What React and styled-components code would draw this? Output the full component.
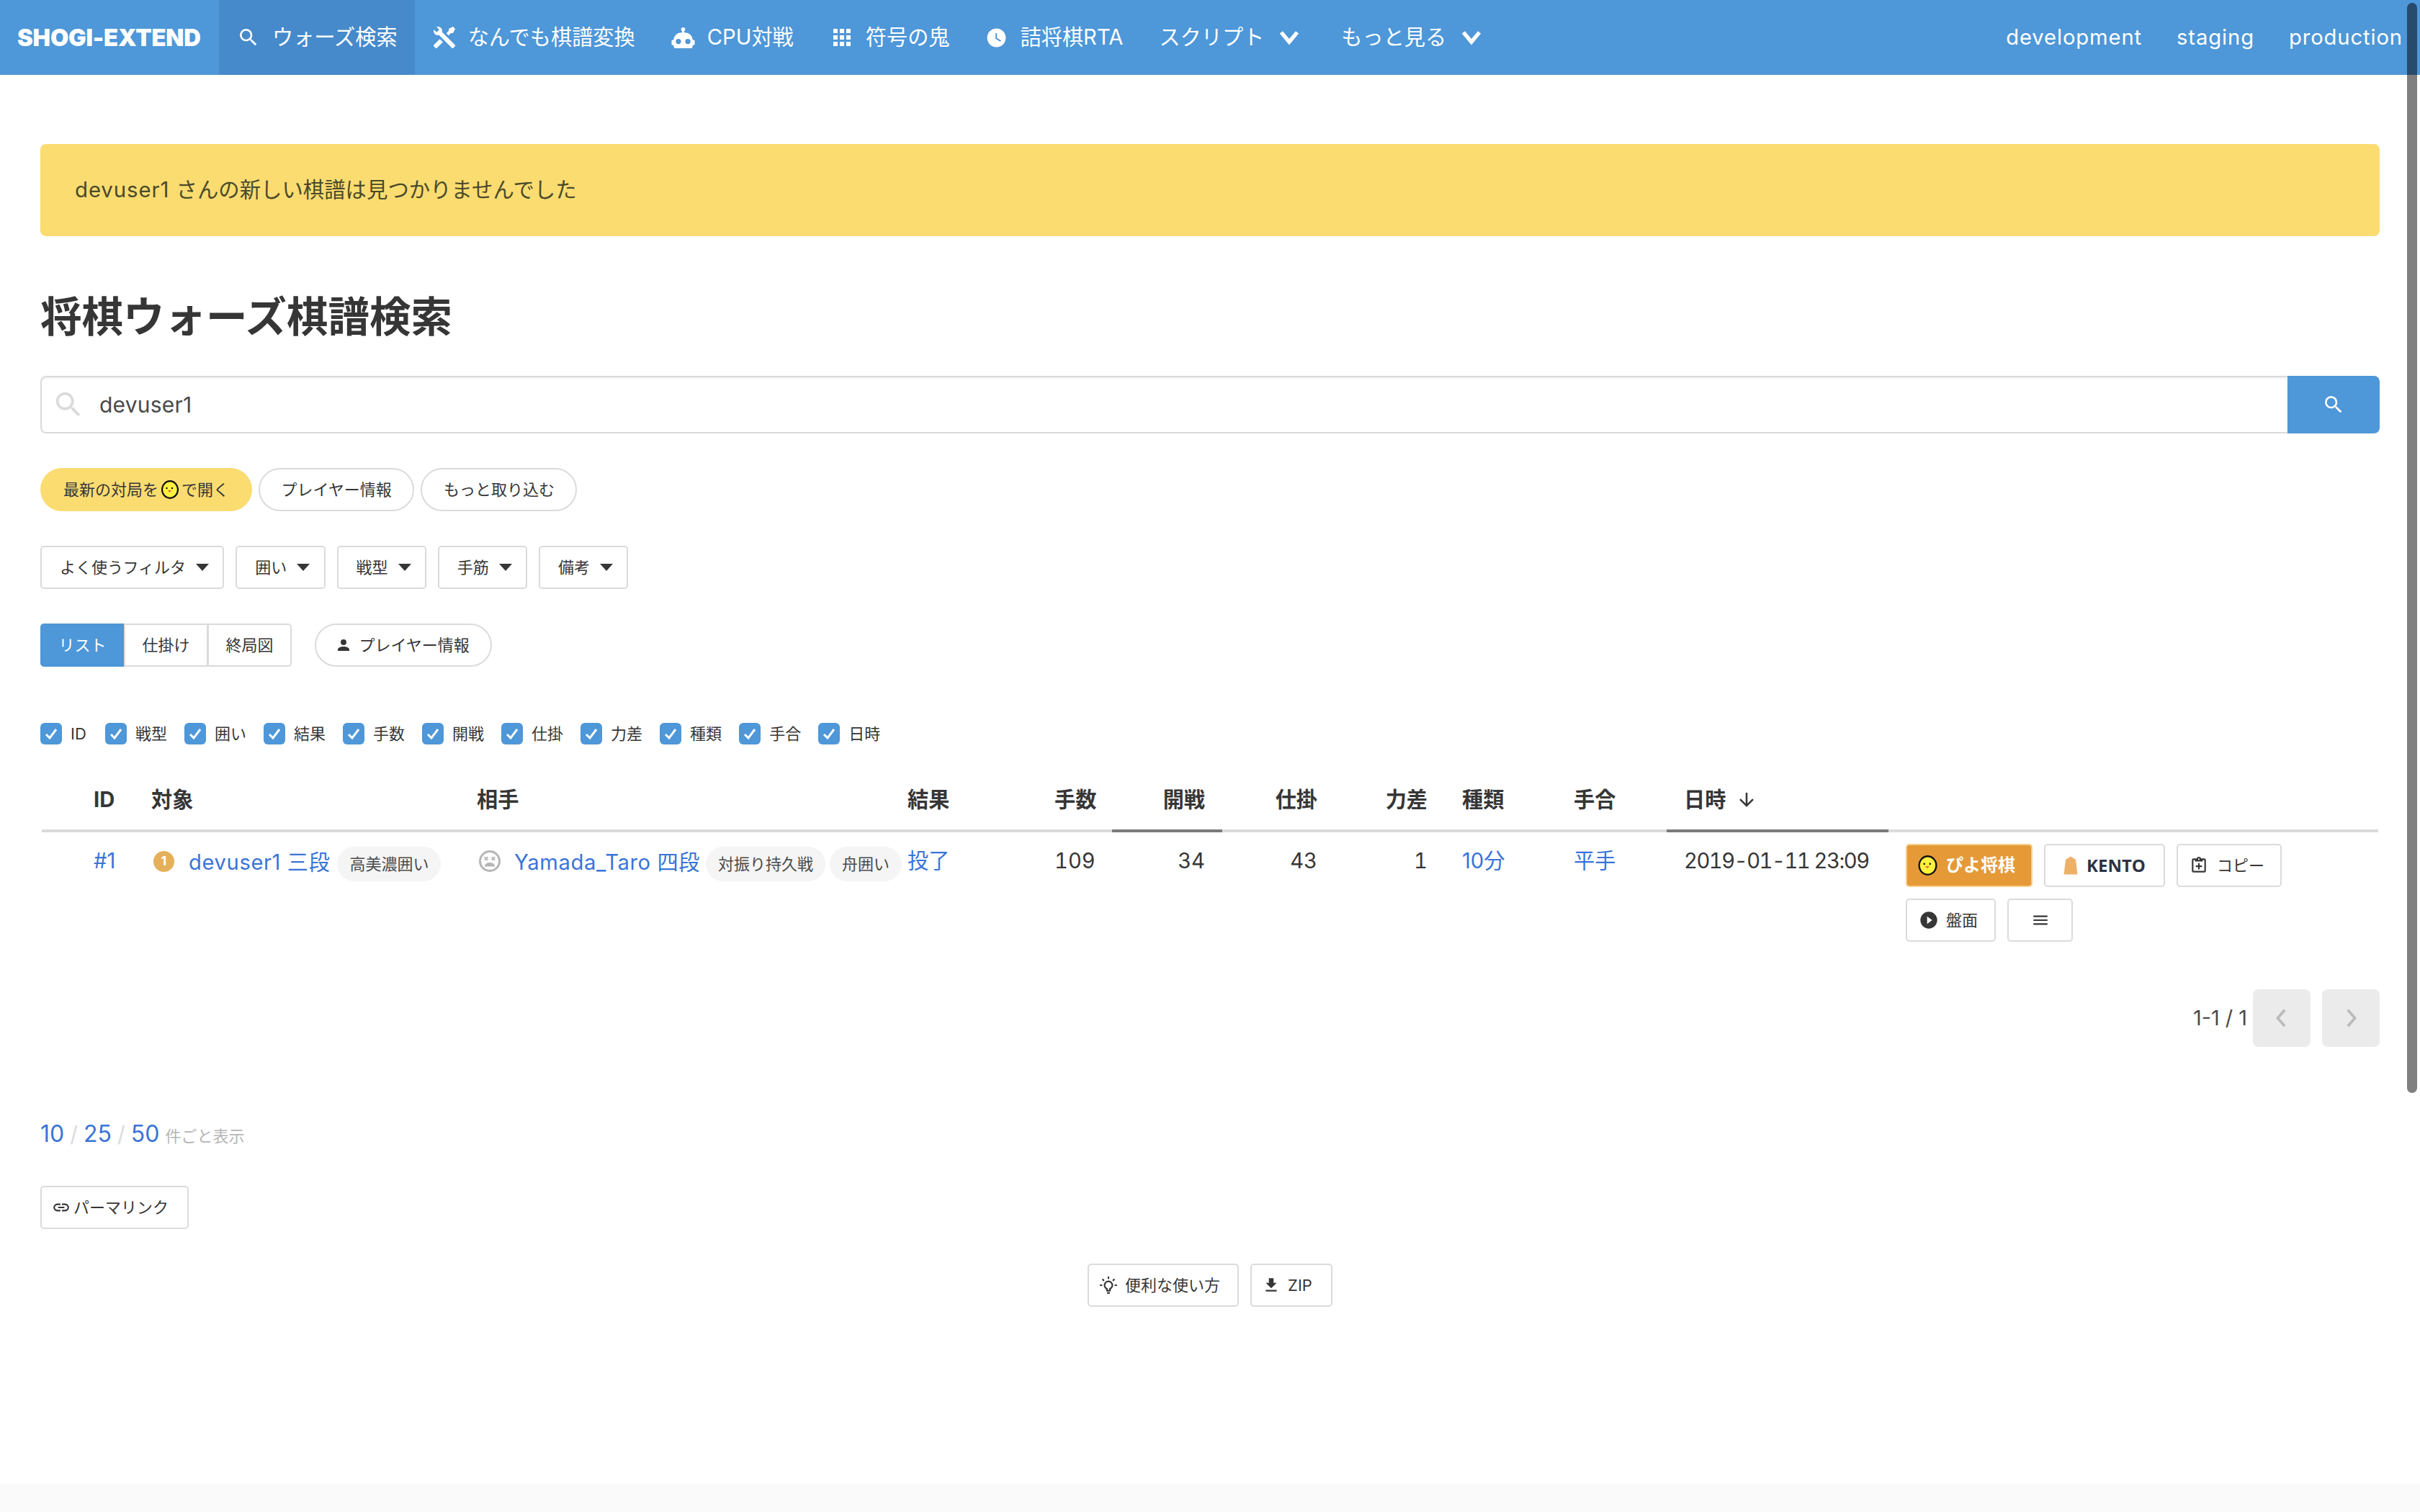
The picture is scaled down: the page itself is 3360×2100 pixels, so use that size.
import React from 'react';
import styled, { createGlobalStyle } from 'styled-components';

const GlobalStyle = createGlobalStyle`
  html, body {
    margin: 0;
    padding: 0;
    height: 2100px;
    overflow: hidden;
    background: #fff;
    color: #363636;
    font-family: Inter, "Noto Sans CJK JP", sans-serif;
    font-size: 29.2px;
    line-height: 1.5;
  }
  * {
    box-sizing: border-box;
  }
`;

const PATHS = {
  magnify: 'M9.5,3A6.5,6.5 0 0,1 16,9.5C16,11.11 15.41,12.59 14.44,13.73L14.71,14H15.5L20.5,19L19,20.5L14,15.5V14.71L13.73,14.44C12.59,15.41 11.11,16 9.5,16A6.5,6.5 0 0,1 3,9.5A6.5,6.5 0 0,1 9.5,3M9.5,5C7,5 5,7 5,9.5C5,12 7,14 9.5,14C12,14 14,12 14,9.5C14,7 12,5 9.5,5Z',
  tools: 'M21.71 20.29L20.29 21.71A1 1 0 0 1 18.88 21.71L7 9.85A3.81 3.81 0 0 1 6 10A4 4 0 0 1 2.22 4.7L4.76 7.24L5.29 6.71L6.71 5.29L7.24 4.76L4.7 2.22A4 4 0 0 1 10 6A3.81 3.81 0 0 1 9.85 7L21.71 18.88A1 1 0 0 1 21.71 20.29M2.29 18.88A1 1 0 0 0 2.29 20.29L3.71 21.71A1 1 0 0 0 5.12 21.71L10.59 16.25L7.76 13.42M20 2L16 4V6L13.83 8.17L15.83 10.17L18 8H20L22 4Z',
  robot: 'M12,2A2,2 0 0,1 14,4C14,4.74 13.6,5.39 13,5.73V7H14A7,7 0 0,1 21,14H22A1,1 0 0,1 23,15V18A1,1 0 0,1 22,19H21V20A2,2 0 0,1 19,22H5A2,2 0 0,1 3,20V19H2A1,1 0 0,1 1,18V15A1,1 0 0,1 2,14H3A7,7 0 0,1 10,7H11V5.73C10.4,5.39 10,4.74 10,4A2,2 0 0,1 12,2M7.5,13A2.5,2.5 0 0,0 5,15.5A2.5,2.5 0 0,0 7.5,18A2.5,2.5 0 0,0 10,15.5A2.5,2.5 0 0,0 7.5,13M16.5,13A2.5,2.5 0 0,0 14,15.5A2.5,2.5 0 0,0 16.5,18A2.5,2.5 0 0,0 19,15.5A2.5,2.5 0 0,0 16.5,13Z',
  apps: 'M16,20H20V16H16M16,14H20V10H16M10,8H14V4H10M16,8H20V4H16M10,14H14V10H10M4,14H8V10H4M4,20H8V16H4M10,20H14V16H10M4,8H8V4H4V8Z',
  clock: 'M12,2A10,10 0 0,0 2,12A10,10 0 0,0 12,22A10,10 0 0,0 22,12A10,10 0 0,0 12,2M16.2,16.2L11,13V7H12.5V12.2L17,14.9L16.2,16.2Z',
  account: 'M12,4A4,4 0 0,1 16,8A4,4 0 0,1 12,12A4,4 0 0,1 8,8A4,4 0 0,1 12,4M12,14C16.42,14 20,15.79 20,18V20H4V18C4,15.79 7.58,14 12,14Z',
  arrowDown: 'M11,4H13V16L18.5,10.5L19.92,11.92L12,19.84L4.08,11.92L5.5,10.5L11,16V4Z',
  clipboardPlus: 'M19,3H14.82C14.4,1.84 13.3,1 12,1C10.7,1 9.6,1.84 9.18,3H5A2,2 0 0,0 3,5V19A2,2 0 0,0 5,21H19A2,2 0 0,0 21,19V5A2,2 0 0,0 19,3M12,3A1,1 0 0,1 13,4A1,1 0 0,1 12,5A1,1 0 0,1 11,4A1,1 0 0,1 12,3M7,7H17V5H19V19H5V5H7V7M11,9H13V12H16V14H13V17H11V14H8V12H11V9Z',
  playCircle: 'M10,16.5V7.5L16,12M12,2A10,10 0 0,0 2,12A10,10 0 0,0 12,22A10,10 0 0,0 22,12A10,10 0 0,0 12,2Z',
  menu: 'M3,6H21V8H3V6M3,11H21V13H3V11M3,16H21V18H3V16Z',
  link: 'M3.9,12C3.9,10.29 5.29,8.9 7,8.9H11V7H7A5,5 0 0,0 2,12A5,5 0 0,0 7,17H11V15.1H7C5.29,15.1 3.9,13.71 3.9,12M8,13H16V11H8V13M17,7H13V8.9H17C18.71,8.9 20.1,10.29 20.1,12C20.1,13.71 18.71,15.1 17,15.1H13V17H17A5,5 0 0,0 22,12A5,5 0 0,0 17,7Z',
  bulb: 'M20,11H23V13H20V11M1,11H4V13H1V11M13,1V4H11V1H13M4.92,3.5L7.05,5.64L5.63,7.05L3.5,4.93L4.92,3.5M16.95,5.63L19.07,3.5L20.5,4.93L18.36,7.05L16.95,5.63M12,6A6,6 0 0,1 18,12C18,14.22 16.79,16.16 15,17.2V19A1,1 0 0,1 14,20H10A1,1 0 0,1 9,19V17.2C7.21,16.16 6,14.22 6,12A6,6 0 0,1 12,6M14,21V22A1,1 0 0,1 13,23H11A1,1 0 0,1 10,22V21H14M11,18H13V15.87C14.73,15.43 16,13.86 16,12A4,4 0 0,0 12,8A4,4 0 0,0 8,12C8,13.86 9.27,15.43 11,15.87V18Z',
  download: 'M5,20H19V18H5M19,9H15V3H9V9H5L12,16L19,9Z',
};

const Mdi = ({ name, size = 28, color = 'currentColor' }) => (
  <svg width={size} height={size} viewBox="0 0 24 24" fill={color} style={{ flexShrink: 0 }}>
    <path d={PATHS[name]} />
  </svg>
);

const Chevron = ({ dir, size, color = '#fff', weight = 3.4 }) => {
  const points = {
    down: '5,7.5 12,16 19,7.5',
    left: '15,4 8,12 15,20',
    right: '9,4 16,12 9,20',
  }[dir];
  return (
    <svg width={size} height={size} viewBox="0 0 24 24" fill="none" stroke={color} strokeWidth={weight}>
      <polyline points={points} />
    </svg>
  );
};

const Chick = ({ width = 24, height = 26 }) => (
  <svg width={width} height={height} viewBox="0 0 24 26" style={{ flexShrink: 0 }}>
    <ellipse cx="12" cy="13" rx="11" ry="11.8" fill="#fff23f" stroke="#111" strokeWidth="2.2" />
    <circle cx="7.5" cy="11" r="1.2" fill="#111" />
    <circle cx="15" cy="11" r="1.2" fill="#111" />
    <path d="M8.5 14h6l-3 3z" fill="#f0703a" />
  </svg>
);

const Koma = () => (
  <svg width="20" height="26" viewBox="0 0 20 26" style={{ flexShrink: 0 }}>
    <path d="M10 0.5L17 5L19.5 25.5H0.5L3 5Z" fill="#eeb069" />
  </svg>
);

const DeadFace = () => (
  <svg width="36" height="36" viewBox="0 0 24 24" fill="none" stroke="#b5b5b5" style={{ flexShrink: 0 }}>
    <circle cx="12" cy="12" r="9" strokeWidth="2" />
    <path d="M7.2 8.2l3 3m0-3l-3 3M13.8 8.2l3 3m0-3l-3 3" strokeWidth="1.3" />
    <path d="M7 17c1-3 3-3.6 5-3.6s4 .6 5 3.6z" fill="#b5b5b5" strokeWidth="0" />
  </svg>
);

const Navbar = styled.nav`
  display: flex;
  align-items: stretch;
  height: 104px;
  background: #4e97d8;
  color: #fff;
`;

const Logo = styled.div`
  display: flex;
  align-items: center;
  width: 304px;
  padding: 2px 0 0 24px;
  font-size: 32.7px;
  font-weight: 900;
  letter-spacing: -0.2px;
  white-space: nowrap;
`;

const NavItem = styled.div`
  display: flex;
  align-items: center;
  padding: 0 ${p => p.$right || 24}px 0 24px;
  white-space: nowrap;
  letter-spacing: ${p => (p.$spaced ? '0.9px' : 'normal')};
  background: ${p => (p.$active ? '#468acb' : 'transparent')};
`;

const NavIcon = styled.span`
  display: flex;
  align-items: center;
  justify-content: center;
  width: 42px;
  height: 42px;
  padding-right: 8px;
  margin-right: 8px;
`;

const NavCaret = styled.span`
  display: flex;
  margin-left: 16px;
`;

const NavEnd = styled.div`
  display: flex;
  margin-left: auto;
`;

const Page = styled.main`
  padding: 96px 56px 0;
`;

const Alert = styled.div`
  height: 128px;
  padding: 0 48px;
  display: flex;
  align-items: center;
  background: #fbdc71;
  border-radius: 8px;
  color: #4a4a2a;
  font-size: 29.4px;
  white-space: pre;
`;

const Latin = styled.span`
  letter-spacing: 0.9px;
`;

const Title = styled.h1`
  margin: 72px 0 42px;
  font-size: 57.5px;
  line-height: 80px;
  font-weight: 700;
`;

const SearchRow = styled.div`
  display: flex;
  height: 80px;
  margin-bottom: 48px;
`;

const SearchBox = styled.div`
  flex: 1;
  display: flex;
  align-items: center;
  padding-left: 14px;
  gap: 20px;
  border: 2px solid #dbdbdb;
  border-right: none;
  border-radius: 8px 0 0 8px;
  box-shadow: inset 0 2px 3px rgba(10, 10, 10, 0.06);
  color: #4a4a4a;
  font-size: 30px;
  letter-spacing: 0.2px;
`;

const SearchButton = styled.div`
  width: 128px;
  display: flex;
  align-items: center;
  justify-content: center;
  background: #4e97d8;
  border-radius: 0 8px 8px 0;
  color: #fff;
`;

const ButtonRow = styled.div`
  display: flex;
  gap: ${p => p.$gap || 16}px;
  margin-bottom: ${p => p.$bottom || 0}px;
  justify-content: ${p => (p.$center ? 'center' : 'flex-start')};
  flex-wrap: wrap;
`;

const Pill = styled.div`
  display: flex;
  align-items: center;
  height: 60px;
  padding: 0 ${p => (p.$yellow ? 32 : 29.5)}px;
  border: ${p => (p.$yellow ? 'none' : '2px solid #dbdbdb')};
  border-radius: 30px;
  background: ${p => (p.$yellow ? '#fbdc71' : '#fff')};
  font-size: 22px;
  white-space: nowrap;
`;

const PillChick = styled.span`
  display: flex;
  margin: 0 4px;
`;

const PillIcon = styled.span`
  display: flex;
  margin: 0 10px 0 -4px;
`;

const DropButton = styled.div`
  display: flex;
  align-items: center;
  height: 60px;
  padding: 0 19.2px 0 25px;
  border: 2px solid #dbdbdb;
  border-radius: 5px;
  font-size: 22px;
  white-space: nowrap;

  &::after {
    content: '';
    margin-left: 14px;
    border-style: solid;
    border-width: 10px 9.5px 0;
    border-color: #363636 transparent transparent;
  }
`;

const TabGroup = styled.div`
  display: flex;
`;

const Tab = styled.div`
  display: flex;
  align-items: center;
  justify-content: center;
  width: 117px;
  height: 60px;
  margin-left: ${p => (p.$first ? 0 : -1)}px;
  border: 2px solid ${p => (p.$active ? '#4e97d8' : '#dbdbdb')};
  border-radius: ${p => (p.$first ? '5px 0 0 5px' : p.$last ? '0 5px 5px 0' : '0')};
  background: ${p => (p.$active ? '#4e97d8' : '#fff')};
  color: ${p => (p.$active ? '#fff' : '#363636')};
  font-size: 22px;
`;

const ColumnChecks = styled.div`
  display: flex;
  gap: 24px;
  margin: 78px 0 42px;
`;

const Check = styled.label`
  display: flex;
  align-items: center;
  gap: 12px;
  height: 30px;
  min-width: 66px;
  font-size: 22px;
`;

const CheckBox = styled.span`
  display: flex;
  align-items: center;
  justify-content: center;
  width: 30px;
  height: 30px;
  border-radius: 6px;
  background: #4e97d8;
`;

const Table = styled.table`
  width: 3244px;
  margin: 0 2px;
  table-layout: fixed;
  border-collapse: separate;
  border-spacing: 0;
`;

const Col = styled.col`
  width: ${p => p.$w}px;
`;

const Th = styled.th`
  height: 80px;
  padding: 0 24px 6px;
  font-weight: 700;
  text-align: ${p => (p.$right ? 'right' : 'left')};
  border-bottom: 4px solid ${p => (p.$sorted ? '#7a7a7a' : '#dbdbdb')};
  white-space: nowrap;
`;

const ThInner = styled.span`
  display: inline-flex;
  align-items: center;
  gap: 14px;
`;

const Td = styled.td`
  padding: 16px 24px 0;
  vertical-align: top;
  line-height: 48px;
  font-variant-numeric: ${p => (p.$num ? 'tabular-nums' : 'normal')};
  text-align: ${p => (p.$right ? 'right' : 'left')};
  white-space: nowrap;
`;

const DateCell = styled(Td)`
  letter-spacing: -1.5px;
`;

const ActionCell = styled.td`
  padding: 16px 24px 0;
  vertical-align: top;
`;

const Link = styled.a`
  color: #3a74d8;
`;

const NameLink = styled(Link)`
  margin-bottom: 4px;
  letter-spacing: 0.6px;
`;

const Player = styled.div`
  display: flex;
  align-items: center;
  height: 48px;
  margin-top: 4px;
  white-space: nowrap;
  line-height: 1;
`;

const PlayerIcon = styled.span`
  display: flex;
  align-items: center;
  width: 36px;
  margin: 0 16px 8px 0;
`;

const Medal = styled.span`
  display: flex;
  align-items: center;
  justify-content: center;
  width: 29px;
  height: 29px;
  margin-left: 3px;
  border-radius: 50%;
  background: #e5b05a;
  color: #fff;
  font-size: 18px;
  font-weight: 700;
`;

const Tag = styled.span`
  display: flex;
  align-items: center;
  height: 48px;
  margin-left: ${p => p.$left || 6}px;
  padding: 0 17px;
  border-radius: 24px;
  background: #f5f5f5;
  color: #4a4a4a;
  font-size: 22px;
  letter-spacing: normal;
`;

const Actions = styled.div`
  display: flex;
  flex-wrap: wrap;
  gap: 16px;
`;

const Button = styled.div`
  display: flex;
  align-items: center;
  height: 60px;
  min-width: ${p => p.$min || 0}px;
  padding: ${p => p.$pad || '0 23px 0 16px'};
  border: 2px solid ${p => (p.$orange ? '#f8cd87' : '#dbdbdb')};
  border-radius: 5px;
  background: ${p => (p.$orange ? '#e59a37' : '#fff')};
  color: ${p => (p.$orange ? '#fff' : '#363636')};
  font-size: ${p => (p.$orange ? 24 : 22)}px;
  font-weight: ${p => (p.$orange ? 700 : 400)};
  justify-content: ${p => (p.$center ? 'center' : 'flex-start')};
  white-space: nowrap;
`;

const ButtonIcon = styled.span`
  display: flex;
  margin-right: ${p => (p.$gap === undefined ? 10 : p.$gap)}px;
`;

const KentoLabel = styled.span`
  color: #2c3345;
  font-family: "Open Sans", sans-serif;
  font-size: 24px;
  font-weight: 700;
`;

const Pager = styled.div`
  display: flex;
  align-items: center;
  justify-content: flex-end;
  margin: 66px 0 0;
`;

const PagerLabel = styled.span`
  margin-right: 8px;
  font-size: 28.8px;
  color: #4a4a4a;
`;

const PagerButton = styled.div`
  display: flex;
  align-items: center;
  justify-content: center;
  width: 80px;
  height: 80px;
  margin-left: ${p => p.$left || 0}px;
  border-radius: 8px;
  background: #ebebeb;
`;

const PerPage = styled.div`
  display: flex;
  align-items: baseline;
  margin: 96px 0 44px;
  line-height: 50px;
  font-size: 32px;
`;

const Slash = styled.span`
  margin: 0 8px;
  color: #dbdbdb;
  font-size: 30px;
`;

const PerPageNote = styled.span`
  margin-left: 8px;
  font-size: 22px;
  color: #b5b5b5;
`;

const Footer = styled.footer`
  height: 40px;
  margin-top: 246px;
  background: #fafafa;
`;

const ScrollThumb = styled.div`
  position: fixed;
  top: 4px;
  right: 4px;
  width: 14px;
  height: 1514px;
  border-radius: 7px;
  background: rgba(0, 0, 0, 0.5);
`;

const NAV_ITEMS = [
  { label: 'ウォーズ検索', icon: 'magnify', size: 32, active: true },
  { label: 'なんでも棋譜変換', icon: 'tools', size: 36, right: 26 },
  { label: 'CPU対戦', icon: 'robot', size: 35, right: 26 },
  { label: '符号の鬼', icon: 'apps', size: 36 },
  { label: '詰将棋RTA', icon: 'clock', size: 31, right: 26 },
];

const CHECKS = ['ID', '戦型', '囲い', '結果', '手数', '開戦', '仕掛', '力差', '種類', '手合', '日時'];

const COLUMNS = [48, 80, 452, 598, 204, 104, 153, 156, 153, 155, 153, 308, 680];

export default function App() {
  return (
    <>
      <GlobalStyle />
      <Navbar>
        <Logo>SHOGI-EXTEND</Logo>
        {NAV_ITEMS.map(item => (
          <NavItem key={item.label} $active={item.active} $right={item.right}>
            <NavIcon>
              <Mdi name={item.icon} size={item.size} />
            </NavIcon>
            {item.label}
          </NavItem>
        ))}
        <NavItem $right={29}>
          スクリプト
          <NavCaret>
            <Chevron dir="down" size={38} />
          </NavCaret>
        </NavItem>
        <NavItem $right={29}>
          もっと見る
          <NavCaret>
            <Chevron dir="down" size={38} />
          </NavCaret>
        </NavItem>
        <NavEnd>
          <NavItem $spaced>development</NavItem>
          <NavItem $spaced>staging</NavItem>
          <NavItem $spaced>production</NavItem>
        </NavEnd>
      </Navbar>

      <Page>
        <Alert>
          <Latin>devuser1 </Latin>さんの新しい棋譜は見つかりませんでした
        </Alert>
        <Title>将棋ウォーズ棋譜検索</Title>

        <SearchRow>
          <SearchBox>
            <Mdi name="magnify" size={46} color="#dbdbdb" />
            devuser1
          </SearchBox>
          <SearchButton>
            <Mdi name="magnify" size={32} />
          </SearchButton>
        </SearchRow>

        <ButtonRow $gap={9} $bottom={48}>
          <Pill $yellow>
            最新の対局を
            <PillChick>
              <Chick />
            </PillChick>
            で開く
          </Pill>
          <Pill>プレイヤー情報</Pill>
          <Pill>もっと取り込む</Pill>
        </ButtonRow>

        <ButtonRow $bottom={48}>
          <DropButton>よく使うフィルタ</DropButton>
          <DropButton>囲い</DropButton>
          <DropButton>戦型</DropButton>
          <DropButton>手筋</DropButton>
          <DropButton>備考</DropButton>
        </ButtonRow>

        <ButtonRow $gap={32}>
          <TabGroup>
            <Tab $first $active>
              リスト
            </Tab>
            <Tab>仕掛け</Tab>
            <Tab $last>終局図</Tab>
          </TabGroup>
          <Pill>
            <PillIcon>
              <Mdi name="account" size={24} />
            </PillIcon>
            プレイヤー情報
          </Pill>
        </ButtonRow>

        <ColumnChecks>
          {CHECKS.map(label => (
            <Check key={label}>
              <CheckBox>
                <svg width="22" height="22" viewBox="0 0 22 22" fill="none" stroke="#fff" strokeWidth="3">
                  <polyline points="4,12 9,17 18,5" />
                </svg>
              </CheckBox>
              {label}
            </Check>
          ))}
        </ColumnChecks>

        <Table>
          <colgroup>
            {COLUMNS.map((w, i) => (
              <Col key={i} $w={w} />
            ))}
          </colgroup>
          <thead>
            <tr>
              <Th />
              <Th>ID</Th>
              <Th>対象</Th>
              <Th>相手</Th>
              <Th>結果</Th>
              <Th $right>手数</Th>
              <Th $right $sorted>開戦</Th>
              <Th $right>仕掛</Th>
              <Th $right>力差</Th>
              <Th>種類</Th>
              <Th>手合</Th>
              <Th $sorted>
                <ThInner>
                  日時
                  <Mdi name="arrowDown" size={30} />
                </ThInner>
              </Th>
              <Th />
            </tr>
          </thead>
          <tbody>
            <tr>
              <Td />
              <Td>
                <Link>#1</Link>
              </Td>
              <Td>
                <Player>
                  <PlayerIcon>
                    <Medal>1</Medal>
                  </PlayerIcon>
                  <NameLink>devuser1 三段</NameLink>
                  <Tag $left={10}>高美濃囲い</Tag>
                </Player>
              </Td>
              <Td>
                <Player>
                  <PlayerIcon>
                    <DeadFace />
                  </PlayerIcon>
                  <NameLink>Yamada_Taro 四段</NameLink>
                  <Tag $left={8}>対振り持久戦</Tag>
                  <Tag>舟囲い</Tag>
                </Player>
              </Td>
              <Td>
                <Link>投了</Link>
              </Td>
              <Td $right $num>109</Td>
              <Td $right $num>34</Td>
              <Td $right $num>43</Td>
              <Td $right $num>1</Td>
              <Td>
                <Link>10分</Link>
              </Td>
              <Td>
                <Link>平手</Link>
              </Td>
              <DateCell $num>2019-01-11 23:09</DateCell>
              <ActionCell>
                <Actions>
                  <Button $orange $pad="0 22px 0 15px">
                    <ButtonIcon $gap={12}>
                      <Chick width={27} height={28} />
                    </ButtonIcon>
                    ぴよ将棋
                  </Button>
                  <Button $pad="0 25px">
                    <ButtonIcon $gap={12}>
                      <Koma />
                    </ButtonIcon>
                    <KentoLabel>KENTO</KentoLabel>
                  </Button>
                  <Button $pad="0 22px 0 16px">
                    <ButtonIcon $gap={12}>
                      <Mdi name="clipboardPlus" size={26} />
                    </ButtonIcon>
                    コピー
                  </Button>
                  <Button>
                    <ButtonIcon>
                      <Mdi name="playCircle" size={28} />
                    </ButtonIcon>
                    盤面
                  </Button>
                  <Button $center $pad="0" $min={91}>
                    <Mdi name="menu" size={26} />
                  </Button>
                </Actions>
              </ActionCell>
            </tr>
          </tbody>
        </Table>

        <Pager>
          <PagerLabel>1-1 / 1</PagerLabel>
          <PagerButton>
            <Chevron dir="left" size={34} color="#bbb" weight={2.6} />
          </PagerButton>
          <PagerButton $left={16}>
            <Chevron dir="right" size={34} color="#bbb" weight={2.6} />
          </PagerButton>
        </Pager>

        <PerPage>
          <Link>10</Link>
          <Slash>/</Slash>
          <Link>25</Link>
          <Slash>/</Slash>
          <Link>50</Link>
          <PerPageNote>件ごと表示</PerPageNote>
        </PerPage>

        <ButtonRow $bottom={48}>
          <Button $pad="0 26px 0 14px">
            <ButtonIcon $gap={4}>
              <Mdi name="link" size={26} />
            </ButtonIcon>
            パーマリンク
          </Button>
        </ButtonRow>

        <ButtonRow $center>
          <Button $pad="0 24px 0 14px">
            <ButtonIcon>
              <Mdi name="bulb" size={26} />
            </ButtonIcon>
            便利な使い方
          </Button>
          <Button $pad="0 26px 0 14px">
            <ButtonIcon>
              <Mdi name="download" size={26} />
            </ButtonIcon>
            ZIP
          </Button>
        </ButtonRow>
      </Page>
      <Footer />
      <ScrollThumb />
    </>
  );
}
